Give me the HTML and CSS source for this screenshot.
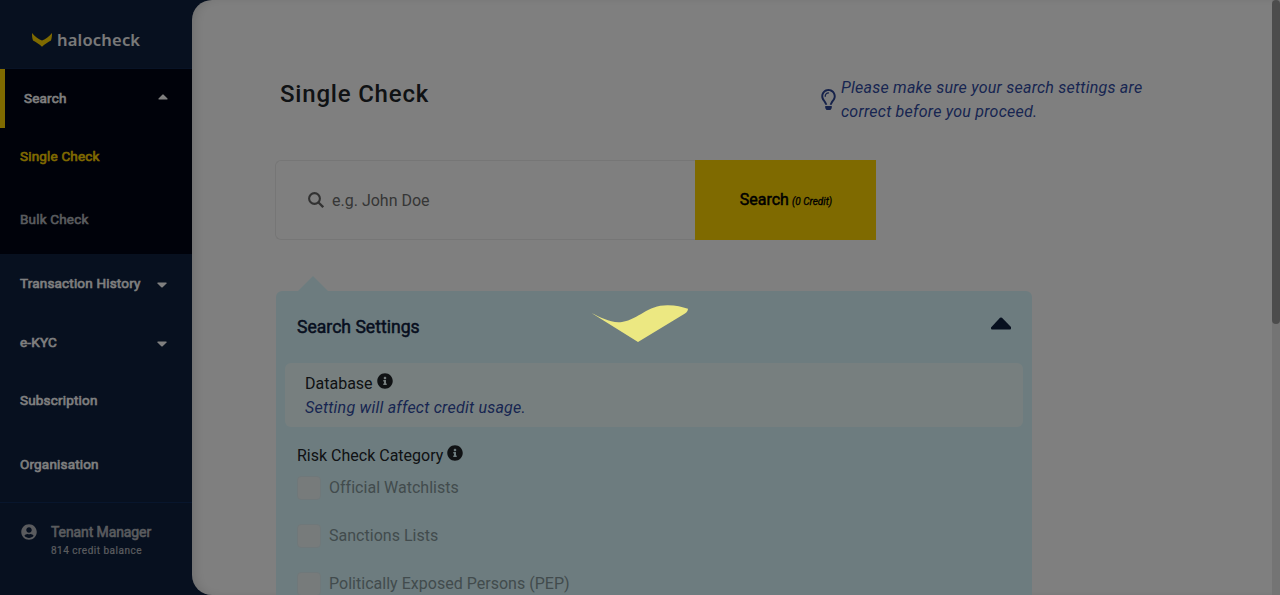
FILE: index.html
```html
<!DOCTYPE html>
<html lang="en">
<head>
<meta charset="utf-8">
<title>Halocheck - Single Check</title>
<link rel="stylesheet" href="styles.css">
</head>
<body>
<div class="app">
  <aside class="sidebar">
    <div class="brand">
      <svg class="brand-mark" width="20" height="14" viewBox="0 0 20 14"><path d="M0 0C3 3.500 6 6 10 7.500C14 6 17 3.500 20 0C20 3 19.800 5 19 7.500C16 9 13 11 10 13.800C7 11 4 9 1 7.500C.2 5 0 3 0 0Z" fill="#ffd500"/></svg>
      <span class="brand-name">halocheck</span>
    </div>
    <nav class="nav">
      <a class="nav-item active"><span>Search</span><svg class="caret" width="10" height="6" viewBox="0 0 10 6"><path d="M1 5.500Q0 5.500 .5 4.500L4.300 .7Q5 0 5.700 .7L9.500 4.500Q10 5.500 9 5.500Z"/></svg></a>
      <div class="subnav">
        <a class="sub-item current">Single Check</a>
        <a class="sub-item">Bulk Check</a>
      </div>
      <a class="nav-item"><span>Transaction History</span><svg class="caret" width="10" height="6" viewBox="0 0 10 6"><path d="M1 .5Q0 .5 .5 1.500L4.300 5.200Q5 5.800 5.700 5.200L9.500 1.500Q10 .5 9 .5Z"/></svg></a>
      <a class="nav-item"><span>e-KYC</span><svg class="caret" width="10" height="6" viewBox="0 0 10 6"><path d="M1 .5Q0 .5 .5 1.500L4.300 5.200Q5 5.800 5.700 5.200L9.500 1.500Q10 .5 9 .5Z"/></svg></a>
      <a class="nav-item plain"><span>Subscription</span></a>
      <a class="nav-item last"><span>Organisation</span></a>
    </nav>
    <div class="user">
      <svg width="16" height="16" viewBox="0 0 496 512" fill="#b4b7bd"><path d="M248 8C111 8 0 119 0 256s111 248 248 248 248-111 248-248S385 8 248 8zm0 96c48.600 0 88 39.400 88 88s-39.400 88-88 88-88-39.400-88-88 39.400-88 88-88zm0 344c-58.700 0-111.300-26.600-146.500-68.200 18.800-35.400 55.600-59.800 98.500-59.800 2.400 0 4.800.4 7.100 1.100 13 4.200 26.600 6.900 40.900 6.900 14.300 0 28-2.700 40.900-6.900 2.300-.7 4.700-1.100 7.100-1.100 42.900 0 79.700 24.400 98.500 59.800C359.300 421.400 306.700 448 248 448z"/></svg>
      <div><div class="user-name">Tenant Manager</div><div class="user-credit">814 credit balance</div></div>
    </div>
  </aside>
  <main class="main">
    <div class="content">
      <header class="heading">
        <h1>Single Check</h1>
        <div class="tip">
          <svg width="15" height="21" viewBox="0 0 352 512" fill="#2c4494"><path d="M176 80c-52.940 0-96 43.060-96 96 0 8.840 7.160 16 16 16s16-7.160 16-16c0-35.300 28.720-64 64-64 8.840 0 16-7.160 16-16s-7.160-16-16-16zM96.060 459.170c0 3.150.93 6.220 2.680 8.840l24.510 36.840c2.970 4.460 7.970 7.140 13.320 7.140h78.850c5.360 0 10.360-2.680 13.320-7.140l24.510-36.840c1.740-2.620 2.670-5.700 2.680-8.840l.05-43.180H96.020l.04 43.180zM176 0C73.720 0 0 82.970 0 176c0 44.370 16.450 84.850 43.560 115.780 16.640 18.990 42.740 58.800 52.420 92.160v.06h48v-.12c-.01-4.770-.72-9.510-2.150-14.070-5.590-17.810-22.820-64.770-62.170-109.670-20.540-23.430-31.520-53.150-31.610-84.140-.2-73.640 59.670-128 127.950-128 70.580 0 128 57.420 128 128 0 30.970-11.240 60.850-31.650 84.140-39.110 44.610-56.420 91.470-62.100 109.460a47.507 47.507 0 0 0-2.220 14.300v.1h48v-.05c9.680-33.370 35.780-73.180 52.420-92.160C335.550 260.850 352 220.370 352 176 352 78.800 273.200 0 176 0z"/></svg>
          <p>Please make sure your search settings are correct before you proceed.</p>
        </div>
      </header>
      <div class="search">
        <div class="field">
          <svg width="16" height="16" viewBox="0 0 16 16" fill="none" stroke="#646464" stroke-width="2.100"><circle cx="6.500" cy="6.500" r="5.400"/><path d="M10.300 10.300L15.200 15.200" stroke-width="2.300"/></svg>
          <span>e.g. John Doe</span>
        </div>
        <div class="submit"><span>Search</span><em>(0 Credit)</em></div>
      </div>
      <section class="settings">
        <svg class="notch" width="30" height="15" viewBox="0 0 30 15"><path d="M0 15L15 0L30 15Z" fill="#dbf9ff"/></svg>
        <div class="settings-head"><h2>Search Settings</h2>
          <svg width="20" height="13" viewBox="0 0 20 13"><path d="M1 12.500Q0 12.500 0 11.500V10.500L9 .8Q10 0 11 .8L20 10V11.500Q20 12.500 19 12.500Z" fill="#0e203e"/></svg>
        </div>
        <div class="database">
          <div class="label">Database<svg class="info" width="16" height="16" viewBox="0 0 512 512" fill="#212529"><path d="M256 8C119.043 8 8 119.083 8 256c0 136.997 111.043 248 248 248s248-111.003 248-248C504 119.083 392.957 8 256 8zm0 110c23.196 0 42 18.804 42 42s-18.804 42-42 42-42-18.804-42-42 18.804-42 42-42zm56 254c0 6.627-5.373 12-12 12h-88c-6.627 0-12-5.373-12-12v-24c0-6.627 5.373-12 12-12h12v-64h-12c-6.627 0-12-5.373-12-12v-24c0-6.627 5.373-12 12-12h64c6.627 0 12 5.373 12 12v100h12c6.627 0 12 5.373 12 12v24z"/></svg></div>
          <div class="note">Setting will affect credit usage.</div>
        </div>
        <div class="risk">
          <div class="label">Risk Check Category<svg class="info" width="16" height="16" viewBox="0 0 512 512" fill="#212529"><path d="M256 8C119.043 8 8 119.083 8 256c0 136.997 111.043 248 248 248s248-111.003 248-248C504 119.083 392.957 8 256 8zm0 110c23.196 0 42 18.804 42 42s-18.804 42-42 42-42-18.804-42-42 18.804-42 42-42zm56 254c0 6.627-5.373 12-12 12h-88c-6.627 0-12-5.373-12-12v-24c0-6.627 5.373-12 12-12h12v-64h-12c-6.627 0-12-5.373-12-12v-24c0-6.627 5.373-12 12-12h64c6.627 0 12 5.373 12 12v100h12c6.627 0 12 5.373 12 12v24z"/></svg></div>
          <div class="option"><i class="box"></i>Official Watchlists</div>
          <div class="option"><i class="box"></i>Sanctions Lists</div>
          <div class="option"><i class="box"></i>Politically Exposed Persons (PEP)</div>
        </div>
      </section>
    </div>
    <div class="track"><div class="thumb"></div></div>
  </main>
</div>
<div class="overlay">
  <svg class="loader" width="98" height="38" viewBox="0 0 98 38"><path d="M.5 8C10 12.500 20 18.500 31 17C49 14 56 0 77 .3C85 .3 91 2 97 3.700C97 5.500 96 7 94 8.500L47 37Z" fill="#ece882"/></svg>
</div>
</body>
</html>
```
FILE: styles.css
```css
* { box-sizing: border-box; }
body { margin: 0; height: 595px; overflow: hidden; font: 16px/24px Roboto, sans-serif; color: #212529; }
h1, h2, p { margin: 0; font-weight: 400; }
svg { flex: none; }
.app { display: flex; height: 595px; background: #0e203e; }
.sidebar { width: 192px; flex: none; display: flex; flex-direction: column; color: #fff; }
.brand { height: 69px; border-bottom: 1px solid #10264c; padding: 12px 0 0 32px; display: flex; align-items: center; gap: 5px; }
.brand-name { font: 600 16.500px/20px "Noto Sans", sans-serif; letter-spacing: .2px; color: #f2f2f2; }
.nav { font-size: 13.500px; -webkit-text-stroke: .6px; letter-spacing: .18px; height: 433px; }
.nav-item { height: 59px; padding: 0 25px 2px 20px; display: flex; align-items: center; justify-content: space-between; }
.nav-item span { padding-bottom: 2px; }
.nav-item.active { background: #000514; border-left: 5px solid #ffd500; padding: 0 24px 0 19px; }
.nav-item .caret { margin-top: 2px; }
.nav-item.active .caret { margin: 0 0 4px; }
.nav-item.plain { height: 58px; }
.nav-item.last { height: 69px; }
.caret { fill: #fff; }
.subnav { background: #000514; height: 126px; margin-bottom: 1px; }
.sub-item { height: 63px; padding: 0 20px 8px; display: flex; align-items: center; color: #b4b7bd; }
.sub-item.current { color: #ffd500; }
.user { flex: 1; border-top: 1px solid #102c5a; padding: 19px 0 0 21px; display: flex; gap: 14px; color: #b4b7bd; }
.user > svg { margin-top: 2px; }
.user-name { font-size: 14px; -webkit-text-stroke: .6px; letter-spacing: -.1px; line-height: 20px; }
.user-credit { font-size: 10px; line-height: 17px; letter-spacing: .5px; -webkit-text-stroke: .2px; }
.main { flex: 1; display: flex; justify-content: space-between; background: #fff; border-radius: 20px 0 0 20px; box-shadow: inset 6px 0 12px -4px rgba(0,0,0,.15); overflow: hidden; }
.content { width: 900px; padding: 75px 0 0 83px; }
.heading { display: flex; justify-content: space-between; width: 892px; height: 85px; padding-left: 5px; }
h1 { font-size: 24px; font-weight: 500; line-height: 38px; letter-spacing: .8px; }
.tip { width: 346px; height: 50px; display: flex; align-items: center; gap: 5px; color: #304ba3; font-style: italic; letter-spacing: .24px; }
.tip svg { margin-bottom: 2px; }
.search { display: flex; width: 601px; height: 80px; }
.field { width: 420px; border: 1px solid #ececec; border-right: 0; border-radius: 6px 0 0 6px; display: flex; align-items: center; padding-left: 32px; gap: 8px; color: #6c6c6c; }
.field span { padding-top: 2px; }
.submit { flex: 1; background: #ffd500; display: flex; align-items: baseline; justify-content: center; gap: 3px; padding: 28px 0 0 1px; color: #000; -webkit-text-stroke: .5px; }
.submit em { font-size: 10px; -webkit-text-stroke: .3px; }
.settings { position: relative; width: 756px; height: 400px; margin: 51px 0 0 1px; background: #dbf9ff; border-radius: 6px; padding: 0 9px; }
.notch { position: absolute; left: 22px; top: -15px; }
.settings-head { height: 72px; padding: 0 12px; display: flex; align-items: center; justify-content: space-between; }
.settings-head svg { margin-bottom: 7px; }
h2 { font-size: 17.600px; color: #0e203e; -webkit-text-stroke: .5px; }
.database { height: 64px; background: #eeffff; border-radius: 6px; padding: 9px 20px; }
.label { display: flex; gap: 4px; height: 24px; }
.info { margin-top: 1px; }
.note { color: #304ba3; font-style: italic; letter-spacing: .24px; }
.risk { padding: 17px 12px; }
.risk .info { margin-top: 1px; }
.option { display: flex; align-items: center; gap: 8px; height: 24px; margin: 8px 0 24px; color: #84979a; letter-spacing: .02px; }
.box { width: 24px; height: 24px; border-radius: 4px; background: #eef6f7; border: 1px solid #dff1f4; }
.track { width: 8px; background: #e8e8e8; }
.thumb { height: 324px; background: #999; border-radius: 4px; }
.overlay { position: absolute; inset: 0; background: rgba(0,0,0,.5); display: flex; justify-content: center; padding-top: 305px; }
```
